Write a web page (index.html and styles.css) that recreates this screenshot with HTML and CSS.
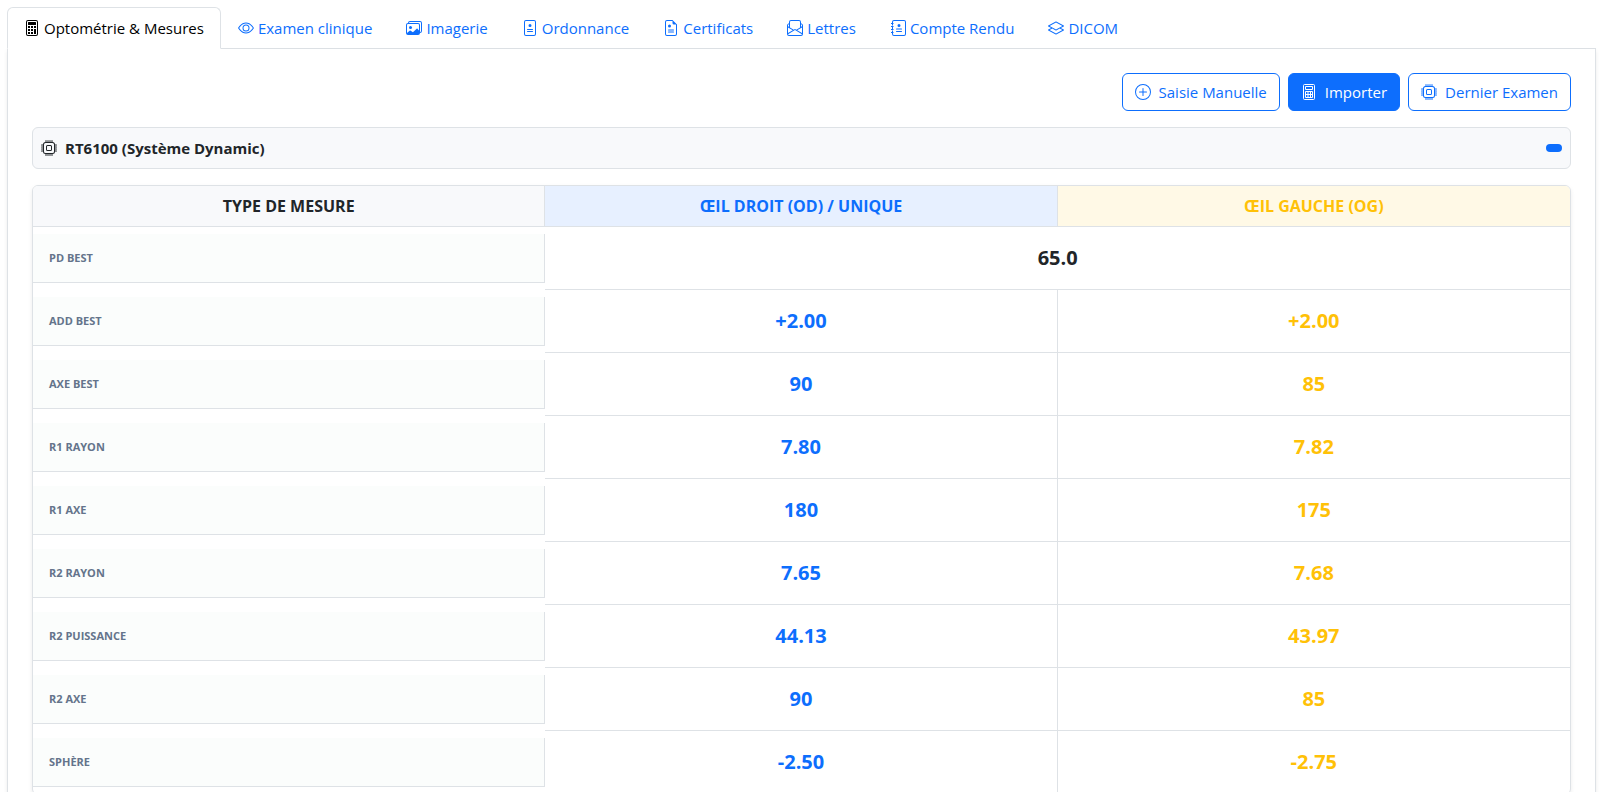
FILE: index.html
```html
<!DOCTYPE html>
<html lang="fr">
<head>
  <meta charset="UTF-8">
  <meta name="viewport" content="width=device-width, initial-scale=1.0">
  <title>Optométrie & Mesures</title>
  <link rel="stylesheet" href="styles.css">
</head>
<body>
    <!-- icônes -->
    <svg class="sprite" aria-hidden="true">
        <symbol id="i-calc" viewBox="0 0 16 16">
            <path d="M12 1a1 1 0 0 1 1 1v12a1 1 0 0 1-1 1H4a1 1 0 0 1-1-1V2a1 1 0 0 1 1-1zM4 0a2 2 0 0 0-2 2v12a2 2 0 0 0 2 2h8a2 2 0 0 0 2-2V2a2 2 0 0 0-2-2z"/>
            <path d="M4 2.500a.5.5 0 0 1 .5-.5h7a.5.5 0 0 1 .5.5v2a.5.5 0 0 1-.5.5h-7a.5.5 0 0 1-.5-.5zM4 6h2v2H4zM7 6h2v2H7zM10 6h2v2h-2zM4 9h2v2H4zM7 9h2v2H7zM10 9h2v5h-2zM4 12h2v2H4zM7 12h2v2H7z"/>
        </symbol>
        <symbol id="i-calc-grid" viewBox="0 0 16 16">
            <path fill="none" stroke="currentColor" d="M3.500.5h9a1 1 0 0 1 1 1v13a1 1 0 0 1-1 1h-9a1 1 0 0 1-1-1v-13a1 1 0 0 1 1-1zM4.500 2.500h7v3h-7zM4.500 7.500h7v6h-7zM4.500 10.500h7M7 7.500v6M9.500 7.500v6"/>
        </symbol>
        <symbol id="i-eye" viewBox="0 0 16 16">
            <path d="M16 8s-3-5.500-8-5.500S0 8 0 8s3 5.500 8 5.500S16 8 16 8M1.173 8a13 13 0 0 1 1.660-2.043C4.120 4.668 5.880 3.500 8 3.500s3.879 1.168 5.168 2.457A13 13 0 0 1 14.828 8q-.086.130-.195.288c-.335.480-.830 1.120-1.465 1.755C11.879 11.332 10.119 12.500 8 12.500s-3.879-1.168-5.168-2.457A13 13 0 0 1 1.172 8z"/>
            <path d="M8 5.500a2.500 2.500 0 1 0 0 5 2.500 2.500 0 0 0 0-5M4.500 8a3.500 3.500 0 1 1 7 0 3.500 3.500 0 0 1-7 0"/>
        </symbol>
        <symbol id="i-images" viewBox="0 0 16 16">
            <path d="M4.502 9a1.500 1.500 0 1 0 0-3 1.500 1.500 0 0 0 0 3"/>
            <path d="M14.002 13a2 2 0 0 1-2 2h-10a2 2 0 0 1-2-2V5A2 2 0 0 1 2 3a2 2 0 0 1 2-2h10a2 2 0 0 1 2 2v8a2 2 0 0 1-1.998 2M14 2H4a1 1 0 0 0-1 1h9.002a2 2 0 0 1 2 2v7A1 1 0 0 0 15 11V3a1 1 0 0 0-1-1M2.002 4a1 1 0 0 0-1 1v8l2.646-2.354a.5.5 0 0 1 .630-.062l2.660 1.773 3.710-3.710a.5.5 0 0 1 .577-.094l1.777 1.947V5a1 1 0 0 0-1-1z"/>
        </symbol>
        <symbol id="i-person" viewBox="0 0 16 16">
            <path d="M12 1a1 1 0 0 1 1 1v12a1 1 0 0 1-1 1H4a1 1 0 0 1-1-1V2a1 1 0 0 1 1-1zM4 0a2 2 0 0 0-2 2v12a2 2 0 0 0 2 2h8a2 2 0 0 0 2-2V2a2 2 0 0 0-2-2z"/>
            <path d="M8 4a1.500 1.500 0 1 0 0 3 1.500 1.500 0 0 0 0-3M5.500 9h5a.5.5 0 0 1 0 1h-5a.5.5 0 0 1 0-1m0 2h5a.5.5 0 0 1 0 1h-5a.5.5 0 0 1 0-1"/>
        </symbol>
        <symbol id="i-cert" viewBox="0 0 16 16">
            <path d="M14 4.500V14a2 2 0 0 1-2 2H4a2 2 0 0 1-2-2V2a2 2 0 0 1 2-2h5.500zm-3 0A1.500 1.500 0 0 1 9.500 3V1H4a1 1 0 0 0-1 1v12a1 1 0 0 0 1 1h8a1 1 0 0 0 1-1V4.500z"/>
            <path d="M6.500 4.500a1.500 1.500 0 1 0 0 3 1.500 1.500 0 0 0 0-3M5.500 9.500h5a.5.5 0 0 1 0 1h-5a.5.5 0 0 1 0-1m0 2h5a.5.5 0 0 1 0 1h-5a.5.5 0 0 1 0-1"/>
        </symbol>
        <symbol id="i-letter" viewBox="0 0 16 16">
            <path d="M4 0a2 2 0 0 0-2 2v1.133l-.941.502A2 2 0 0 0 0 5.400V14a2 2 0 0 0 2 2h12a2 2 0 0 0 2-2V5.400a2 2 0 0 0-1.059-1.765L14 3.133V2a2 2 0 0 0-2-2zm10 4.267.470.250A1 1 0 0 1 15 5.400v.817l-1 .600zm-1 3.150-3.750 2.250L8 8.917l-1.250.750L3 7.417V2a1 1 0 0 1 1-1h8a1 1 0 0 1 1 1zm-11-.600-1-.600V5.400a1 1 0 0 1 .530-.882L2 4.267zm13 .566v5.734l-4.778-2.867zm-.035 6.880A1 1 0 0 1 14 15H2a1 1 0 0 1-.965-.738L8 10.083zM1 13.116V7.383l4.778 2.867z"/>
        </symbol>
        <symbol id="i-journal" viewBox="0 0 16 16">
            <path d="M4 0h10a2 2 0 0 1 2 2v12a2 2 0 0 1-2 2H4a2 2 0 0 1-2-2v-1h1v1a1 1 0 0 0 1 1h10a1 1 0 0 0 1-1V2a1 1 0 0 0-1-1H4a1 1 0 0 0-1 1v1H2V2a2 2 0 0 1 2-2"/>
            <path d="M2 4h1v1.500H2zM2 7h1v2H2zM2 10.500h1V12H2zM1 3h2.500v1H1zM1 6h2.500v1H1zM1 9h2.500v1H1zM1 12h2.500v1H1z"/>
            <path d="M9 4a1.500 1.500 0 1 0 0 3 1.500 1.500 0 0 0 0-3M6.500 8.500h5a.5.5 0 0 1 0 1h-5a.5.5 0 0 1 0-1m0 2.500h5a.5.5 0 0 1 0 1h-5a.5.5 0 0 1 0-1"/>
        </symbol>
        <symbol id="i-layers" viewBox="0 0 16 16">
            <path d="M8.235 1.559a.5.5 0 0 0-.470 0l-7.500 4a.5.5 0 0 0 0 .882L3.188 8 .264 9.559a.5.5 0 0 0 0 .882l7.500 4a.5.5 0 0 0 .470 0l7.500-4a.5.5 0 0 0 0-.882L12.813 8l2.922-1.559a.5.5 0 0 0 0-.882zm3.515 7.008L14.438 10 8 13.433 1.562 10 4.250 8.567l3.515 1.874a.5.5 0 0 0 .470 0zM8 9.433 1.562 6 8 2.567 14.438 6z"/>
        </symbol>
        <symbol id="i-plus" viewBox="0 0 16 16">
            <path d="M8 15A7 7 0 1 1 8 1a7 7 0 0 1 0 14m0 1A8 8 0 1 0 8 0a8 8 0 0 0 0 16"/>
            <path d="M8 4a.5.5 0 0 1 .5.5v3h3a.5.5 0 0 1 0 1h-3v3a.5.5 0 0 1-1 0v-3h-3a.5.5 0 0 1 0-1h3v-3A.5.5 0 0 1 8 4"/>
        </symbol>
        <symbol id="i-cpu" viewBox="0 0 16 16">
            <path d="M5 0a.5.5 0 0 1 .5.5V2h1V.5a.5.5 0 0 1 1 0V2h1V.5a.5.5 0 0 1 1 0V2h1V.5a.5.5 0 0 1 1 0V2A2.500 2.500 0 0 1 14 4.500h1.500a.5.5 0 0 1 0 1H14v1h1.500a.5.5 0 0 1 0 1H14v1h1.500a.5.5 0 0 1 0 1H14v1h1.500a.5.5 0 0 1 0 1H14a2.500 2.500 0 0 1-2.500 2.500v1.500a.5.5 0 0 1-1 0V14h-1v1.500a.5.5 0 0 1-1 0V14h-1v1.500a.5.5 0 0 1-1 0V14h-1v1.500a.5.5 0 0 1-1 0V14A2.500 2.500 0 0 1 2 11.500H.5a.5.5 0 0 1 0-1H2v-1H.5a.5.5 0 0 1 0-1H2v-1H.5a.5.5 0 0 1 0-1H2v-1H.5a.5.5 0 0 1 0-1H2A2.500 2.500 0 0 1 4.500 2V.5A.5.5 0 0 1 5 0m-.5 3A1.500 1.500 0 0 0 3 4.500v7A1.500 1.500 0 0 0 4.500 13h7a1.500 1.500 0 0 0 1.500-1.500v-7A1.500 1.500 0 0 0 11.500 3zM5 6.500A1.500 1.500 0 0 1 6.500 5h3A1.500 1.500 0 0 1 11 6.500v3A1.500 1.500 0 0 1 9.500 11h-3A1.500 1.500 0 0 1 5 9.500zM6.500 6a.5.5 0 0 0-.5.5v3a.5.5 0 0 0 .5.5h3a.5.5 0 0 0 .5-.5v-3a.5.5 0 0 0-.5-.5z"/>
        </symbol>
    </svg>

    <nav class="tabs">
        <a class="tab active" href="#optometrie"><svg class="icon"><use href="#i-calc"/></svg>Optométrie &amp; Mesures</a>
        <a class="tab" href="#examen"><svg class="icon"><use href="#i-eye"/></svg>Examen clinique</a>
        <a class="tab" href="#imagerie"><svg class="icon"><use href="#i-images"/></svg>Imagerie</a>
        <a class="tab" href="#ordonnance"><svg class="icon"><use href="#i-person"/></svg>Ordonnance</a>
        <a class="tab" href="#certificats"><svg class="icon"><use href="#i-cert"/></svg>Certificats</a>
        <a class="tab" href="#lettres"><svg class="icon"><use href="#i-letter"/></svg>Lettres</a>
        <a class="tab" href="#compte-rendu"><svg class="icon"><use href="#i-journal"/></svg>Compte Rendu</a>
        <a class="tab" href="#dicom"><svg class="icon"><use href="#i-layers"/></svg>DICOM</a>
    </nav>

    <main class="panel" id="optometrie">
        <div class="actions">
            <button type="button" class="btn"><svg class="icon"><use href="#i-plus"/></svg>Saisie Manuelle</button>
            <button type="button" class="btn btn-primary"><svg class="icon"><use href="#i-calc-grid"/></svg>Importer</button>
            <button type="button" class="btn"><svg class="icon"><use href="#i-cpu"/></svg>Dernier Examen</button>
        </div>

        <div class="device">
            <h6><svg class="icon"><use href="#i-cpu"/></svg>RT6100 (Système Dynamic)</h6>
            <span class="badge"></span>
        </div>

        <div class="table-wrap">
            <table>
                <thead>
                    <tr><th>TYPE DE MESURE</th><th class="od">ŒIL DROIT (OD) / UNIQUE</th><th class="og">ŒIL GAUCHE (OG)</th></tr>
                </thead>
                <tbody>
                    <tr><td class="type"><div>PD BEST</div></td><td class="single" colspan="2">65.0</td></tr>
                    <tr><td class="type"><div>ADD BEST</div></td><td class="val-od">+2.00</td><td class="val-og">+2.00</td></tr>
                    <tr><td class="type"><div>AXE BEST</div></td><td class="val-od">90</td><td class="val-og">85</td></tr>
                    <tr><td class="type"><div>R1 RAYON</div></td><td class="val-od">7.80</td><td class="val-og">7.82</td></tr>
                    <tr><td class="type"><div>R1 AXE</div></td><td class="val-od">180</td><td class="val-og">175</td></tr>
                    <tr><td class="type"><div>R2 RAYON</div></td><td class="val-od">7.65</td><td class="val-og">7.68</td></tr>
                    <tr><td class="type"><div>R2 PUISSANCE</div></td><td class="val-od">44.13</td><td class="val-og">43.97</td></tr>
                    <tr><td class="type"><div>R2 AXE</div></td><td class="val-od">90</td><td class="val-og">85</td></tr>
                    <tr><td class="type"><div>SPHÈRE</div></td><td class="val-od">-2.50</td><td class="val-og">-2.75</td></tr>
                </tbody>
            </table>
        </div>
    </main>
</body>
</html>
```
FILE: styles.css
```css
* {
    box-sizing: border-box;
}
body {
    margin: 0;
    padding: 7px 9px 0 7px;
    font-family: "Open Sans", "Noto Sans", sans-serif;
    font-size: 15px;
    line-height: 24px;
    color: #212529;
    background: #fff;
}
.sprite {
    display: none;
}
.icon {
    width: 16px;
    height: 16px;
    fill: currentColor;
    flex: none;
}

/* onglets */
.tabs {
    display: flex;
    border-bottom: 1px solid #dee2e6;
}
.tab {
    display: flex;
    align-items: center;
    gap: 4px;
    padding: 8px 16px;
    margin-bottom: -1px;
    border: 1px solid transparent;
    border-radius: 6px 6px 0 0;
    color: #0d6efd;
    text-decoration: none;
    white-space: nowrap;
}
.tab.active {
    color: #000;
    background: #fff;
    border-color: #dee2e6 #dee2e6 #fff;
}

.panel {
    padding: 24px;
    border: 1px solid #dee2e6;
    border-top: 0;
    box-shadow: 0 2px 4px rgba(0,0,0,0.08);
}
.actions {
    display: flex;
    justify-content: flex-end;
    gap: 8px;
    margin-bottom: 16px;
}
.btn {
    display: flex;
    align-items: center;
    gap: 8px;
    padding: 6px 12px;
    border: 1px solid #0d6efd;
    border-radius: 6px;
    background: #fff;
    color: #0d6efd;
    font: inherit;
    cursor: pointer;
}
.btn-primary {
    background: #0d6efd;
    color: #fff;
}

.device {
    display: flex;
    justify-content: space-between;
    align-items: center;
    padding: 8px;
    margin-bottom: 16px;
    border: 1px solid #dee2e6;
    border-radius: 6px;
    background: #f8f9fb;
}
.device h6 {
    display: flex;
    align-items: center;
    gap: 8px;
    margin: 0;
    font-size: 15px;
    font-weight: 700;
}
.badge {
    width: 16px;
    height: 8px;
    border-radius: 4px;
    background: #0d6efd;
}

/* tableau des mesures */
.table-wrap {
    border: 1px solid #dee2e6;
    border-radius: 6px;
    overflow: hidden;
    box-shadow: 0 2px 4px rgba(0,0,0,0.08);
}
table {
    width: 100%;
    table-layout: fixed;
    border-collapse: separate;
    border-spacing: 0;
    text-align: center;
}
th {
    padding: 8px;
    border-bottom: 1px solid #dee2e6;
    border-right: 1px solid #dee2e6;
    background: #f8f9fb;
    font-size: 16px;
    font-weight: 700;
}
th.od {
    background: #e7f0ff;
    color: #0d6efd;
}
th.og {
    background: #fff9e6;
    color: #ffc107;
}
td {
    padding: 16px;
    border-bottom: 1px solid #dee2e6;
    border-right: 1px solid #dee2e6;
    font-size: 20px;
    line-height: 30px;
    font-weight: 700;
}
th:last-child, td:last-child {
    border-right: 0;
}
.type {
    padding: 0;
    border: 0;
    vertical-align: middle;
}
.type div {
    padding: 12px 16px;
    border-right: 1px solid #dee2e6;
    border-bottom: 1px solid #dee2e6;
    background: #fbfdfc;
    color: #64748b;
    font-size: 11px;
    line-height: 24px;
    text-align: left;
}
.val-od {
    color: #0d6efd;
}
.val-og {
    color: #ffc107;
}
```
